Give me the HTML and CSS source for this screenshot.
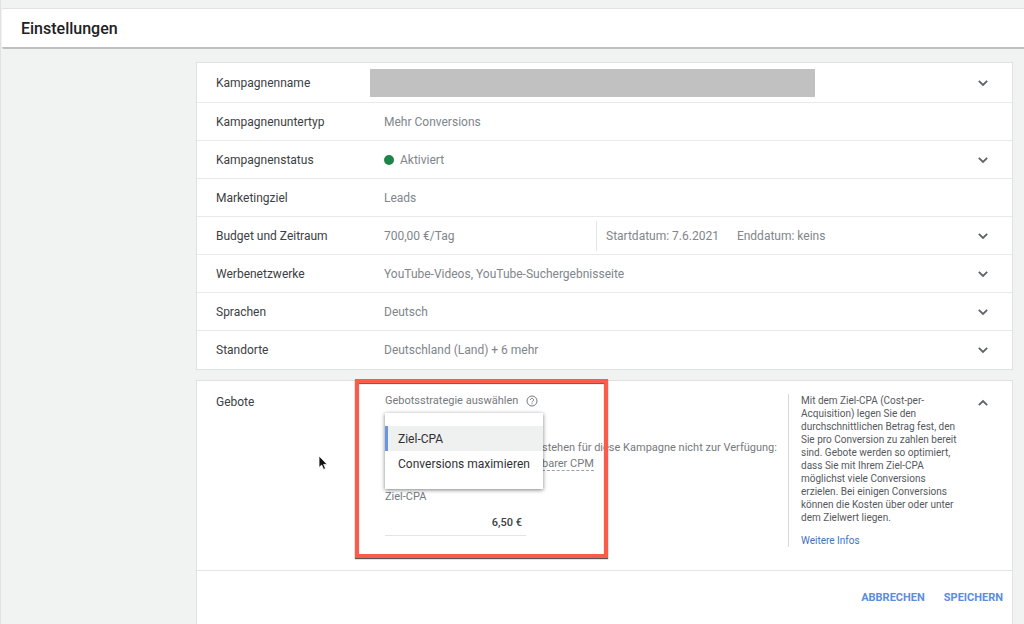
FILE: index.html
```html
<!DOCTYPE html>
<html lang="de">
<head>
<meta charset="utf-8">
<title>Einstellungen</title>
<link rel="stylesheet" href="styles.css">
</head>
<body>
<svg class="defs" aria-hidden="true">
  <symbol id="chevron" viewBox="0 0 12 12"><path d="M1.800 3.800 6 8l4.200-4.200" fill="none" stroke="currentColor" stroke-width="1.800"/></symbol>
</svg>
<div class="page">
  <header class="titlebar"><h1 class="title">Einstellungen</h1></header>
  <main class="content">
    <section class="card">
      <div class="row"><span class="name">Kampagnenname</span><span class="redacted"></span><button class="toggle" aria-label="Kampagnenname bearbeiten"><svg class="chevron"><use href="#chevron"/></svg></button></div>
      <div class="row"><span class="name">Kampagnenuntertyp</span><span class="value">Mehr Conversions</span></div>
      <div class="row"><span class="name">Kampagnenstatus</span><span class="value status">Aktiviert</span><button class="toggle" aria-label="Kampagnenstatus bearbeiten"><svg class="chevron"><use href="#chevron"/></svg></button></div>
      <div class="row"><span class="name">Marketingziel</span><span class="value">Leads</span></div>
      <div class="row"><span class="name">Budget und Zeitraum</span><span class="value budget"><span>700,00 €/Tag</span><span class="dates"><span>Startdatum: 7.6.2021</span><span>Enddatum: keins</span></span></span><button class="toggle" aria-label="Budget bearbeiten"><svg class="chevron"><use href="#chevron"/></svg></button></div>
      <div class="row"><span class="name">Werbenetzwerke</span><span class="value">YouTube-Videos, YouTube-Suchergebnisseite</span><button class="toggle" aria-label="Werbenetzwerke bearbeiten"><svg class="chevron"><use href="#chevron"/></svg></button></div>
      <div class="row"><span class="name">Sprachen</span><span class="value">Deutsch</span><button class="toggle" aria-label="Sprachen bearbeiten"><svg class="chevron"><use href="#chevron"/></svg></button></div>
      <div class="row"><span class="name">Standorte</span><span class="value">Deutschland (Land) + 6 mehr</span><button class="toggle" aria-label="Standorte bearbeiten"><svg class="chevron"><use href="#chevron"/></svg></button></div>
    </section>

    <section class="card bids">
      <div class="bids-body">
        <span class="name">Gebote</span>
        <div class="strategy">
          <div class="strategy-label">Gebotsstrategie auswählen
            <svg class="help-icon" viewBox="0 0 12 12"><circle cx="6" cy="6" r="5" fill="none" stroke="currentColor"/><path d="M4.400 4.900a1.600 1.500 0 1 1 2.500 1.200Q6 6.600 6 7.400" fill="none" stroke="currentColor"/><path d="M5.500 8.200h1v1h-1z" fill="currentColor"/></svg>
          </div>
          <p class="notice">stehen für diese Kampagne nicht zur Verfügung:<br><span class="term">barer CPM</span></p>
          <label class="field-label" for="cpa">Ziel-CPA</label>
          <input class="field" id="cpa" type="text" value="6,50 €">
          <div class="menu" role="listbox" aria-label="Gebotsstrategie">
            <button class="option selected" role="option" aria-selected="true">Ziel-CPA</button>
            <button class="option" role="option" aria-selected="false">Conversions maximieren</button>
          </div>
          <div class="highlight"></div>
          <svg class="cursor" viewBox="0 0 10 16"><path d="M1 1v11.500l2.700-2.400 1.900 4.300 2-.9-1.900-4.100h3.500z" fill="#111" stroke="#fff" stroke-width=".8"/></svg>
        </div>
        <aside class="info">
          <p class="info-text">Mit dem Ziel-CPA (Cost-per-Acquisition) legen Sie den durchschnittlichen Betrag fest, den Sie pro Conversion zu zahlen bereit sind. Gebote werden so optimiert, dass Sie mit Ihrem Ziel-CPA möglichst viele Conversions erzielen. Bei einigen Conversions können die Kosten über oder unter dem Zielwert liegen.</p>
          <a class="info-link" href="#infos">Weitere Infos</a>
        </aside>
        <button class="toggle open" aria-label="Gebote schließen"><svg class="chevron"><use href="#chevron"/></svg></button>
      </div>
      <div class="actions">
        <button class="action">ABBRECHEN</button>
        <button class="action">SPEICHERN</button>
      </div>
    </section>
  </main>
</div>
</body>
</html>
```

FILE: styles.css
```css
* { box-sizing: border-box; }
body {
  margin: 0;
  background: #f0f3f2;
  color: #3c4043;
  font: 12px/16px Roboto, sans-serif;
}
button, input { font: inherit; color: inherit; border: 0; background: none; padding: 0; margin: 0; }
button { cursor: pointer; }
.defs { display: none; }
.page {
  display: flex;
  flex-direction: column;
  min-height: 100vh;
  padding-top: 8px;
  border-left: 1px solid #dfe2e1;
}
.titlebar {
  padding: 10px 19px 8px;
  margin-left: 1px;
  background: #fff;
  border-top: 1px solid #dfe2e1;
  border-bottom: 2px solid #bfc1c1;
  border-radius: 2px 0 0 2px;
}
.title { margin: 0; font-size: 16px; line-height: 20px; font-weight: 500; color: #202124; }
.content {
  flex: 1;
  display: flex;
  flex-direction: column;
  gap: 10px;
  padding: 13px 11px 0 195px;
}
.card { background: #fff; border: 1px solid #dfe2e1; padding: 1px 0; }
.row {
  display: grid;
  grid-template-columns: 168px 1fr 24px;
  align-items: center;
  height: 38px;
  padding: 0 17px 0 19px;
}
.row + .row { border-top: 1px solid #e8eaea; }
.name { color: #3c4043; }
.value { color: #80868b; }
.redacted { height: 28px; width: 445px; margin-left: -14px; background: #c1c1c1; }
.toggle { width: 24px; height: 24px; display: grid; place-items: center; color: #5f6368; }
.open { height: 18px; transform: rotate(180deg); }
.chevron { width: 12px; height: 12px; display: block; }
.status { display: flex; align-items: center; gap: 6px; }
.status::before { content: ""; width: 10px; height: 10px; border-radius: 50%; background: #1e8449; }
.budget { display: grid; grid-template-columns: 212px 1fr; align-items: center; }
.dates { display: flex; gap: 18px; padding: 7px 9px; border-left: 1px solid #e3e5e5; }

.bids { flex: 1; border-bottom: 0; padding: 0; }
.bids-body {
  display: grid;
  grid-template-columns: 169px 1fr 183px 24px;
  padding: 13px 17px 23px 19px;
  border-bottom: 1px solid #e3e5e5;
}
.strategy { position: relative; font-size: 11px; color: #757a7e; }
.strategy-label { display: flex; align-items: center; gap: 8px; line-height: 14px; }
.help-icon { width: 12px; height: 12px; }
.notice { margin: 32px 0 0; padding-left: 157px; white-space: nowrap; }
.term { border-bottom: 1px dashed #9aa0a6; }
.field-label { display: block; margin-top: 17px; }
.field {
  display: block;
  width: 141px;
  height: 31px;
  padding: 4px 4px 0 0;
  border-bottom: 1px solid #e3e5e5;
  text-align: right;
  color: #3c4043;
  font-weight: 500;
}
.menu {
  position: absolute;
  top: 19px;
  left: 0;
  width: 158px;
  padding: 13px 0;
  background: #fff;
  box-shadow: 0 1px 4px rgba(0, 0, 0, .5);
  font-size: 12px;
}
.option {
  display: block;
  width: 100%;
  height: 25px;
  padding: 0 10px;
  border-left: 3px solid transparent;
  text-align: left;
  white-space: nowrap;
  color: #303134;
}
.selected { background: #eff0f0; border-left-color: #6a95e0; }
.highlight {
  position: absolute;
  top: -15px;
  left: -30px;
  width: 253px;
  height: 179px;
  border: 4px solid #fa5c4c;
  box-shadow: 0 1px 1px #555, inset 0 1px 1px #555;
}
.cursor { position: absolute; left: -67px; top: 61px; width: 10px; height: 16px; }
.info { padding: 0 11px 0 12px; border-left: 1px solid #d5d7d8; font-size: 10px; line-height: 13px; color: #55595d; }
.info-text { margin: 0 0 10px; }
.info-link { color: #4272bd; text-decoration: none; }
.actions { display: flex; justify-content: flex-end; gap: 19px; padding: 19px 9px; font-size: 11px; }
.action { color: #5b8ddf; font-weight: 700; }
```
